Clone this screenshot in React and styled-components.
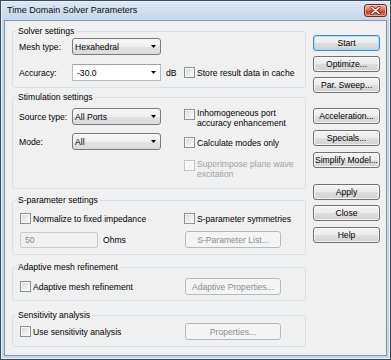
import React from "react";
import styled, { createGlobalStyle, css } from "styled-components";

const GlobalStyle = createGlobalStyle`
  html, body {
    margin: 0;
    padding: 0;
    background: #ffffff;
  }
  body {
    font-family: "Liberation Sans", Arial, sans-serif;
    font-size: 8.6px;
    color: #000;
  }
  #root {
    width: 391px;
    height: 360px;
    overflow: hidden;
  }
`;

const Window = styled.div`
  width: 391px;
  height: 360px;
  box-sizing: border-box;
  border: 1px solid #3d4b5c;
  background: linear-gradient(#dbe7f5 0, #c6d7eb 19px, #c3d5ea 100%);
  box-shadow: inset 0 0 0 1px #e6f0fb;
  display: flex;
  flex-direction: column;
  padding: 0 3px 3px;
`;

const TitleBar = styled.div`
  height: 19px;
  display: flex;
  align-items: flex-start;
  justify-content: space-between;
  padding-left: 3px;
`;

const Title = styled.div`
  font-size: 9px;
  line-height: 19px;
  color: #0b0b0b;
`;

const CloseBox = styled.div`
  margin-top: 3px;
  width: 23px;
  height: 13px;
  box-sizing: border-box;
  border: 1px solid #74271b;
  border-radius: 3px;
  background: linear-gradient(#eab0a2 0%, #d8796a 45%, #c4412a 55%, #d5775c 100%);
  box-shadow: inset 0 0 0 1px rgba(255, 220, 210, 0.5);
  display: flex;
  align-items: center;
  justify-content: center;
`;

const Client = styled.div`
  flex: 1;
  background: #f0f0f0;
  border: 1px solid #8396ad;
  display: flex;
  gap: 7px;
  padding: 4px 5px 0 7px;
`;

const LeftCol = styled.div`
  width: 294px;
  display: flex;
  flex-direction: column;
`;

const RightCol = styled.div`
  width: 67px;
  display: flex;
  flex-direction: column;
  padding-top: 10px;
`;

const Group = styled.fieldset`
  margin: ${(p) => p.$mt || 0}px 0 0;
  padding: ${(p) => p.$pad};
  border: 1px solid #d5dfe5;
  border-radius: 3px;
  min-width: 0;
`;

const Legend = styled.legend`
  padding: 0 2px;
  margin-left: -3px;
  line-height: 12px;
  font-size: 8.6px;
`;

const Grid = styled.div`
  display: grid;
  grid-template-columns: 165px 1fr;
  row-gap: ${(p) => p.$gap || 0}px;
  align-items: center;
`;

const Stack = styled.div`
  display: flex;
  flex-direction: column;
  gap: ${(p) => p.$gap || 0}px;
`;

const Row = styled.div`
  display: flex;
  align-items: center;
  height: ${(p) => p.$h || 17}px;
`;

const Label = styled.span`
  width: 53px;
  white-space: nowrap;
`;

const Unit = styled.span`
  margin-left: ${(p) => p.$ml || 5}px;
`;

const fieldBase = css`
  box-sizing: border-box;
  width: 89px;
  height: 17px;
  display: flex;
  align-items: center;
  justify-content: space-between;
`;

const Select = styled.div`
  ${fieldBase};
  border: 1px solid #7a7a7a;
  border-radius: 3px;
  padding: 0 4px 0 2px;
  background: linear-gradient(#f7f7f7 0%, #efefef 50%, #e3e3e3 51%, #dadada 100%);
`;

const Combo = styled.div`
  ${fieldBase};
  border: 1px solid #b5b9c0;
  border-top-color: #9da2aa;
  padding: 0 4px 0 4px;
  background: #ffffff;
`;

const Field = styled.div`
  box-sizing: border-box;
  margin-left: 1px;
  width: 78px;
  height: 16px;
  border: 1px solid #c9cbcf;
  border-radius: 2px;
  background: #f0f0f0;
  color: #8a8a8a;
  display: flex;
  align-items: center;
  padding-left: 4px;
`;

const Check = styled.span`
  box-sizing: border-box;
  flex: none;
  width: 11px;
  height: 11px;
  border: 1px solid ${(p) => (p.$disabled ? "#c2c4c6" : "#8e8f8f")};
  background: ${(p) =>
    p.$disabled
      ? "#f5f5f5"
      : "linear-gradient(135deg, #d4d6d9 0%, #eeeeee 60%, #fbfbfb 100%)"};
  box-shadow: inset 0 0 0 1px ${(p) => (p.$disabled ? "#fafafa" : "#f6f6f6")};
`;

const CheckItem = styled.label`
  display: flex;
  align-items: ${(p) => (p.$multi ? "flex-start" : "center")};
  gap: 2px;
  line-height: 10px;
  margin-top: ${(p) => p.$mt || 0}px;
  margin-left: ${(p) => p.$ml || 0}px;
  color: ${(p) => (p.$disabled ? "#a3a3a3" : "#000")};
  ${Check} {
    margin-top: ${(p) => (p.$multi ? "1px" : "0")};
  }
`;

const Button = styled.div`
  box-sizing: border-box;
  height: ${(p) => p.$h || 16}px;
  width: ${(p) => p.$w || 67}px;
  margin-top: ${(p) => p.$mt || 0}px;
  margin-left: ${(p) => p.$ml || 0}px;
  border: 1px solid #717171;
  border-radius: 3px;
  background: linear-gradient(#f3f3f3 0%, #ececec 50%, #dedede 51%, #d2d2d2 100%);
  box-shadow: inset 0 0 0 1px rgba(255, 255, 255, 0.7);
  display: flex;
  align-items: center;
  justify-content: center;
  white-space: nowrap;
  ${(p) =>
    p.$default &&
    css`
      border-color: #3e8fc4;
      box-shadow: inset 0 0 0 1px #a7ddf5;
    `}
  ${(p) =>
    p.$disabled &&
    css`
      border-color: #b7babc;
      background: #f4f4f4;
      box-shadow: none;
      color: #8d8d8d;
    `}
`;

function Arrow() {
  return (
    <svg width="5" height="3" viewBox="0 0 5 3">
      <polygon points="0,0 5,0 2.5,3" fill="#000" />
    </svg>
  );
}

function CloseX() {
  return (
    <svg width="11" height="9" viewBox="0 0 11 9">
      <path d="M2 1.5 L9 7.5 M9 1.5 L2 7.5" stroke="#6a2216" strokeWidth="3" strokeLinecap="round" />
      <path d="M2 1.5 L9 7.5 M9 1.5 L2 7.5" stroke="#ffffff" strokeWidth="1.6" strokeLinecap="round" />
    </svg>
  );
}

function CheckBox({ children, disabled, multi, mt, ml }) {
  return (
    <CheckItem $disabled={disabled} $multi={multi} $mt={mt} $ml={ml}>
      <Check $disabled={disabled} />
      <span>{children}</span>
    </CheckItem>
  );
}

export default function App() {
  return (
    <>
      <GlobalStyle />
      <Window>
        <TitleBar>
          <Title>Time Domain Solver Parameters</Title>
          <CloseBox>
            <CloseX />
          </CloseBox>
        </TitleBar>
        <Client>
          <LeftCol>
            <Group $pad="1px 6px 6px">
              <Legend>Solver settings</Legend>
              <Grid $gap={9}>
                <Row>
                  <Label>Mesh type:</Label>
                  <Select>
                    <span>Hexahedral</span>
                    <Arrow />
                  </Select>
                </Row>
                <div />
                <Row>
                  <Label>Accuracy:</Label>
                  <Combo>
                    <span>-30.0</span>
                    <Arrow />
                  </Combo>
                  <Unit>dB</Unit>
                </Row>
                <CheckBox>Store result data in cache</CheckBox>
              </Grid>
            </Group>

            <Group $mt={3} $pad="5px 6px 9px">
              <Legend>Stimulation settings</Legend>
              <Grid style={{ alignItems: "start" }}>
                <Stack $gap={8}>
                  <Row>
                    <Label>Source type:</Label>
                    <Select>
                      <span>All Ports</span>
                      <Arrow />
                    </Select>
                  </Row>
                  <Row>
                    <Label>Mode:</Label>
                    <Select>
                      <span>All</span>
                      <Arrow />
                    </Select>
                  </Row>
                </Stack>
                <Stack>
                  <CheckBox multi>
                    Inhomogeneous port
                    <br />
                    accuracy enhancement
                  </CheckBox>
                  <CheckBox mt={9}>Calculate modes only</CheckBox>
                  <CheckBox multi disabled mt={11}>
                    Superimpose plane wave
                    <br />
                    excitation
                  </CheckBox>
                </Stack>
              </Grid>
            </Group>

            <Group $mt={5} $pad="7px 6px 6px">
              <Legend>S-parameter settings</Legend>
              <Grid $gap={7}>
                <CheckBox ml={1}>Normalize to fixed impedance</CheckBox>
                <CheckBox>S-parameter symmetries</CheckBox>
                <Row>
                  <Field>50</Field>
                  <Unit>Ohms</Unit>
                </Row>
                <Button $disabled $w={96} $h={17} $ml={1}>
                  S-Parameter List...
                </Button>
              </Grid>
            </Group>

            <Group $mt={6} $pad="5px 6px 5px">
              <Legend>Adaptive mesh refinement</Legend>
              <Grid>
                <CheckBox ml={1}>Adaptive mesh refinement</CheckBox>
                <Button $disabled $w={96} $h={17} $ml={1}>
                  Adaptive Properties...
                </Button>
              </Grid>
            </Group>

            <Group $mt={8} $pad="2px 6px 6px">
              <Legend>Sensitivity analysis</Legend>
              <Grid>
                <CheckBox ml={1}>Use sensitivity analysis</CheckBox>
                <Button $disabled $w={96} $h={17} $ml={1}>
                  Properties...
                </Button>
              </Grid>
            </Group>
          </LeftCol>

          <RightCol>
            <Button $default>Start</Button>
            <Button $mt={5}>Optimize...</Button>
            <Button $mt={5}>Par. Sweep...</Button>
            <Button $mt={15}>Acceleration...</Button>
            <Button $mt={6}>Specials...</Button>
            <Button $mt={6}>Simplify Model...</Button>
            <Button $mt={16}>Apply</Button>
            <Button $mt={5}>Close</Button>
            <Button $mt={6}>Help</Button>
          </RightCol>
        </Client>
      </Window>
    </>
  );
}
